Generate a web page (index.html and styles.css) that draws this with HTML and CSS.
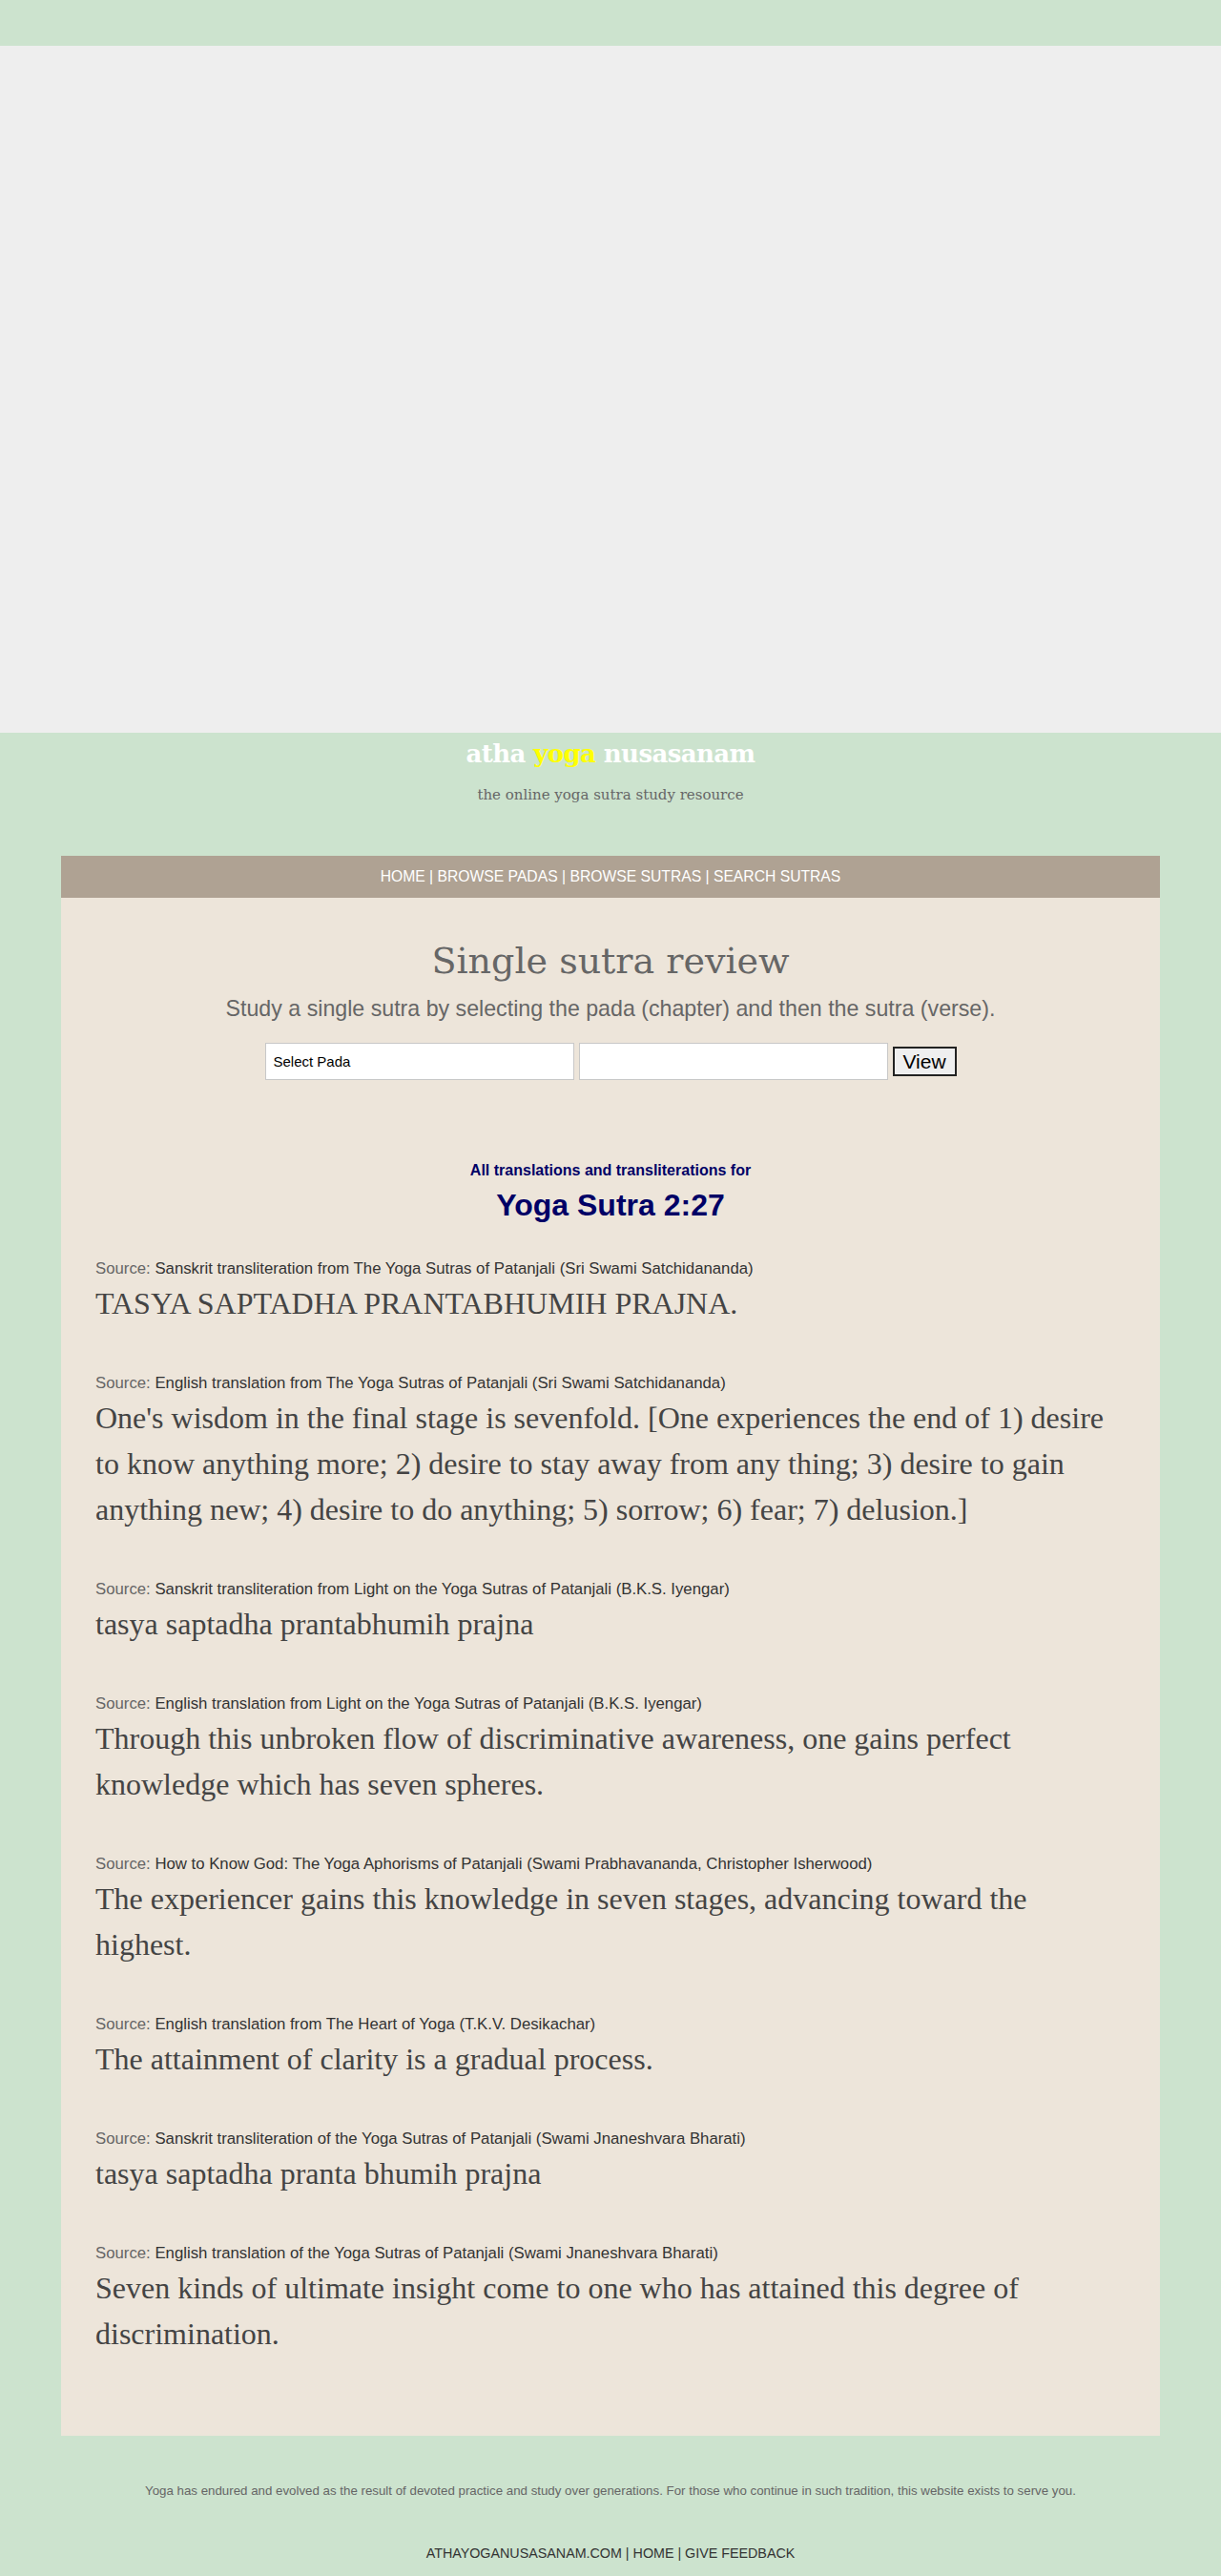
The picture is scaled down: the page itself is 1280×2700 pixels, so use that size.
FILE: index.html
```html
<!DOCTYPE html>
<html lang="en">
<head>
<meta charset="utf-8">
<title>Single sutra review - atha yoga nusasanam</title>
<link rel="stylesheet" href="styles.css">
</head>
<body>
<div class="topbar"></div>
<div class="adbox"></div>
<header class="site-header">
  <h1 class="logo">atha <span class="yoga">yoga</span> nusasanam</h1>
  <p class="tagline">the online yoga sutra study resource</p>
</header>
<main class="card">
  <nav class="nav">HOME | BROWSE PADAS | BROWSE SUTRAS | SEARCH SUTRAS</nav>
  <div class="card-body">
    <h2 class="page-title">Single sutra review</h2>
    <p class="page-sub">Study a single sutra by selecting the pada (chapter) and then the sutra (verse).</p>
    <form class="picker">
      <div class="field">Select Pada</div>
      <div class="field"></div>
      <button type="button" class="view-btn">View</button>
    </form>
    <p class="for-label">All translations and transliterations for</p>
    <h3 class="sutra-id">Yoga Sutra 2:27</h3>

    <section class="entry">
      <p class="source"><span class="src-label">Source:</span> Sanskrit transliteration from The Yoga Sutras of Patanjali (Sri Swami Satchidananda)</p>
      <p class="text">TASYA SAPTADHA PRANTABHUMIH PRAJNA.</p>
    </section>
    <section class="entry">
      <p class="source"><span class="src-label">Source:</span> English translation from The Yoga Sutras of Patanjali (Sri Swami Satchidananda)</p>
      <p class="text">One's wisdom in the final stage is sevenfold. [One experiences the end of 1) desire to know anything more; 2) desire to stay away from any thing; 3) desire to gain anything new; 4) desire to do anything; 5) sorrow; 6) fear; 7) delusion.]</p>
    </section>
    <section class="entry">
      <p class="source"><span class="src-label">Source:</span> Sanskrit transliteration from Light on the Yoga Sutras of Patanjali (B.K.S. Iyengar)</p>
      <p class="text">tasya saptadha prantabhumih prajna</p>
    </section>
    <section class="entry">
      <p class="source"><span class="src-label">Source:</span> English translation from Light on the Yoga Sutras of Patanjali (B.K.S. Iyengar)</p>
      <p class="text">Through this unbroken flow of discriminative awareness, one gains perfect knowledge which has seven spheres.</p>
    </section>
    <section class="entry">
      <p class="source"><span class="src-label">Source:</span> How to Know God: The Yoga Aphorisms of Patanjali (Swami Prabhavananda, Christopher Isherwood)</p>
      <p class="text">The experiencer gains this knowledge in seven stages, advancing toward the highest.</p>
    </section>
    <section class="entry">
      <p class="source"><span class="src-label">Source:</span> English translation from The Heart of Yoga (T.K.V. Desikachar)</p>
      <p class="text">The attainment of clarity is a gradual process.</p>
    </section>
    <section class="entry">
      <p class="source"><span class="src-label">Source:</span> Sanskrit transliteration of the Yoga Sutras of Patanjali (Swami Jnaneshvara Bharati)</p>
      <p class="text">tasya saptadha pranta bhumih prajna</p>
    </section>
    <section class="entry">
      <p class="source"><span class="src-label">Source:</span> English translation of the Yoga Sutras of Patanjali (Swami Jnaneshvara Bharati)</p>
      <p class="text">Seven kinds of ultimate insight come to one who has attained this degree of discrimination.</p>
    </section>
  </div>
</main>
<footer class="site-footer">
  <p class="motto">Yoga has endured and evolved as the result of devoted practice and study over generations. For those who continue in such tradition, this website exists to serve you.</p>
  <p class="links">ATHAYOGANUSASANAM.COM | HOME | GIVE FEEDBACK</p>
</footer>
</body>
</html>
```

FILE: styles.css
```css
html, body {
  margin: 0;
  padding: 0;
}
body {
  background: #cce3ce;
  font-family: "Liberation Sans", Arial, sans-serif;
  color: #333;
}
p, h1, h2, h3 {
  margin: 0;
}
.topbar {
  height: 48px;
}
.adbox {
  height: 720px;
  background: #eeeeee;
}
.site-header {
  text-align: center;
  padding-top: 4px;
}
.logo {
  font-family: "DejaVu Serif", serif;
  font-weight: bold;
  font-size: 26px;
  line-height: 36px;
  color: #ffffff;
  letter-spacing: -0.6px;
}
.logo .yoga {
  color: #ffff00;
}
.tagline {
  margin-top: 13px;
  font-family: "DejaVu Serif", serif;
  font-size: 15px;
  line-height: 24px;
  color: #666;
}
.card {
  display: block;
  width: 1152px;
  margin: 52px auto 0;
  background: #ede5da;
}
.nav {
  background: #afa293;
  height: 44px;
  line-height: 44px;
  text-align: center;
  color: #fff;
  font-size: 15.7px;
}
.card-body {
  padding: 42px 36px 35px;
}
.page-title {
  text-align: center;
  font-family: "DejaVu Serif", serif;
  font-weight: normal;
  font-size: 38px;
  line-height: 48px;
  color: #666;
}
.page-sub {
  text-align: center;
  margin-top: 11px;
  font-size: 23.2px;
  line-height: 30px;
  color: #666;
}
.picker {
  margin-top: 21px;
  display: flex;
  justify-content: center;
  align-items: center;
  gap: 5px;
}
.field {
  box-sizing: border-box;
  width: 324px;
  height: 39px;
  background: #fff;
  border: 1px solid #c8c8c8;
  font-size: 15px;
  line-height: 37px;
  padding-left: 8px;
  color: #000;
}
.view-btn {
  box-sizing: border-box;
  width: 67px;
  height: 31px;
  border: 2px solid #222;
  background: #efefef;
  font-family: "Liberation Sans", Arial, sans-serif;
  font-size: 21px;
  color: #000;
  padding: 0;
}
.for-label {
  margin-top: 83px;
  text-align: center;
  font-weight: bold;
  font-size: 16px;
  line-height: 24px;
  color: #000066;
}
.sutra-id {
  margin-top: 4px;
  text-align: center;
  font-weight: bold;
  font-size: 32px;
  line-height: 40px;
  color: #000066;
}
.entry {
  margin-top: 35px;
}
.entry + .entry {
  margin-top: 48px;
}
.source {
  font-size: 16.75px;
  line-height: 24px;
  color: #333;
}
.src-label {
  color: #666;
}
.text {
  font-family: "Liberation Serif", "Times New Roman", serif;
  font-size: 32px;
  line-height: 48px;
  color: #444;
}
.entry:last-child {
  margin-bottom: 48px;
}
.site-footer {
  text-align: center;
  padding-top: 48px;
}
.motto {
  font-size: 13.3px;
  line-height: 20px;
  color: #666;
}
.links {
  margin-top: 45px;
  font-size: 14.3px;
  line-height: 20px;
  color: #333;
}
```
